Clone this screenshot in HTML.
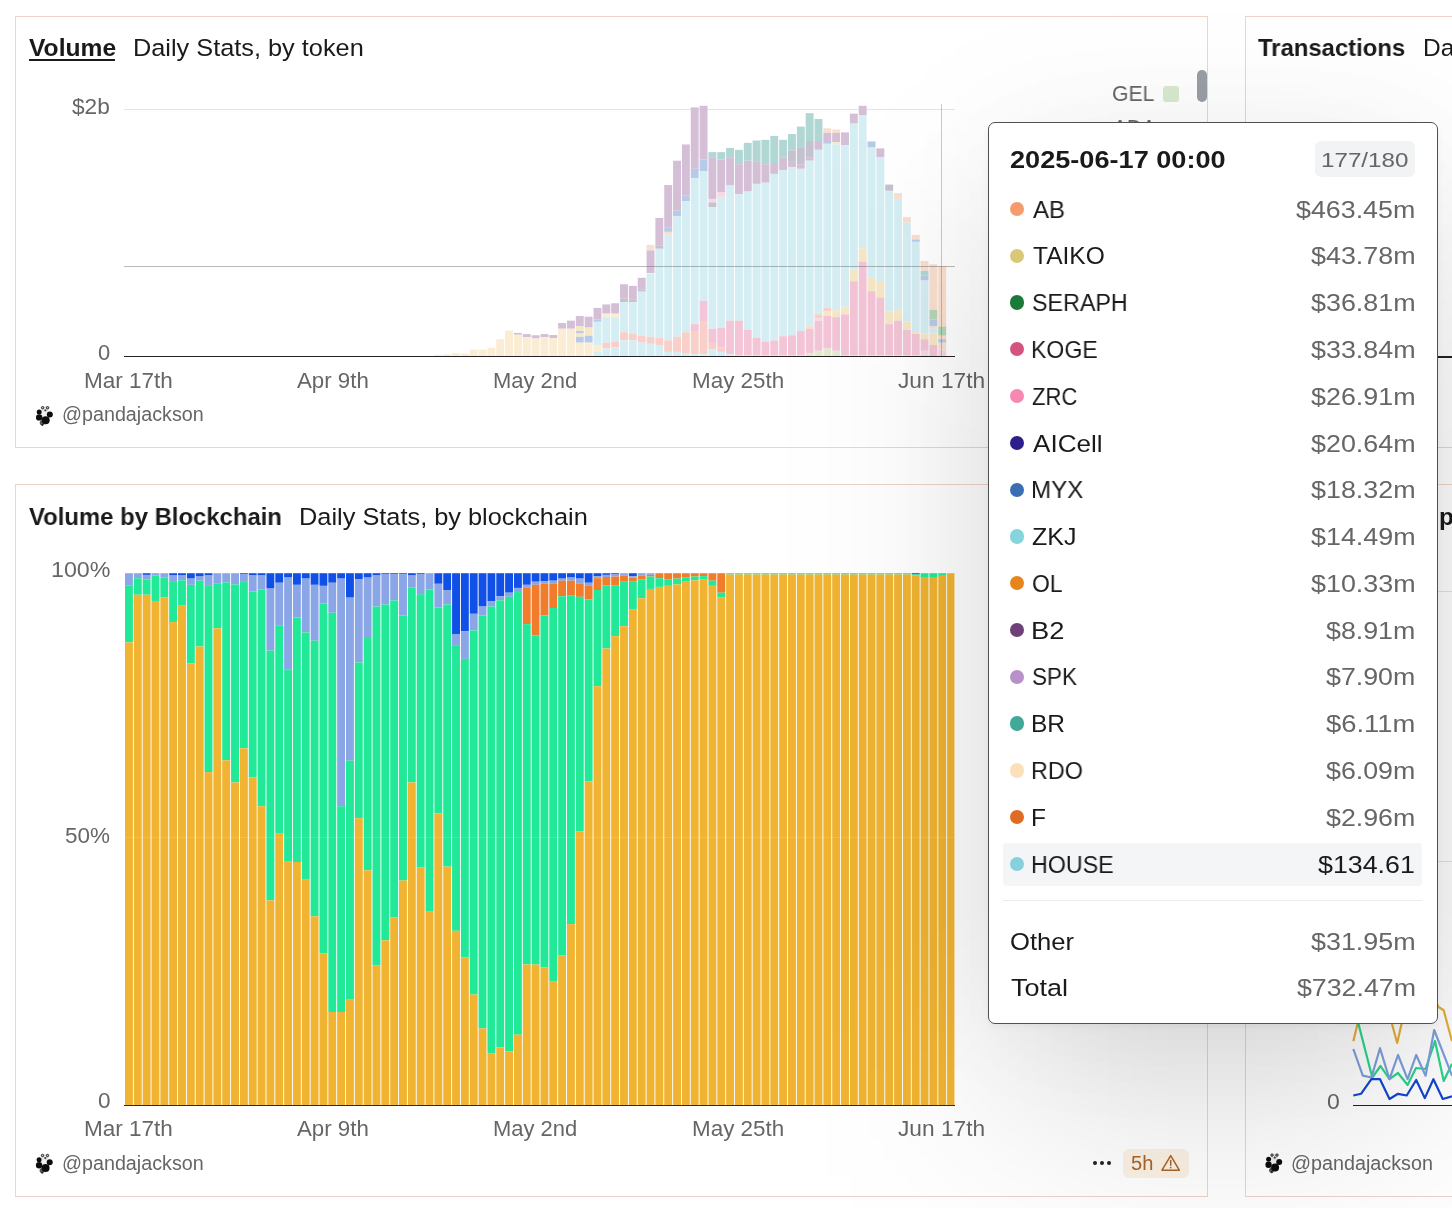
<!DOCTYPE html>
<html><head><meta charset="utf-8"><title>Dashboard</title>
<style>
html,body{margin:0;padding:0;}
body{width:1452px;height:1208px;overflow:hidden;position:relative;background:#fff;font-family:"Liberation Sans",sans-serif;}
.t{position:absolute;white-space:nowrap;line-height:1;transform-origin:0 0;will-change:transform;}
.r{position:absolute;}
.card{position:absolute;border:1px solid #f0d3cb;box-sizing:border-box;background:transparent;}
svg{position:absolute;left:0;top:0;}
</style></head><body>
<div class="card" style="left:15px;top:16px;width:1193px;height:432px;"></div>
<div class="card" style="left:15px;top:484px;width:1193px;height:713px;"></div>
<div class="card" style="left:1244.5px;top:16px;width:260px;height:432px;"></div>
<div class="card" style="left:1244.5px;top:484px;width:260px;height:713px;"></div>
<div class="t" style="left:28.80px;top:36.26px;font-size:24.5px;color:#1a1a1a;transform:scaleX(1.0047);font-weight:700;">Volume</div>
<div class="r" style="left:28.7px;top:59.3px;width:86.6px;height:1.7px;background:#1a1a1a;"></div>
<div class="t" style="left:132.53px;top:36.26px;font-size:24.5px;color:#1a1a1a;transform:scaleX(1.0332);">Daily Stats, by token</div>
<div class="t" style="left:72.39px;top:96.60px;font-size:21.5px;color:#666;transform:scaleX(1.0546);">$2b</div>
<div class="t" style="left:97.98px;top:342.90px;font-size:21.5px;color:#666;transform:scaleX(1.0194);">0</div>
<div class="r" style="left:124.0px;top:109.0px;width:831.0px;height:1.0px;background:#e4e4e4;"></div>
<div class="t" style="left:84.12px;top:371.10px;font-size:21.5px;color:#666;transform:scaleX(1.0477);">Mar 17th</div>
<div class="t" style="left:84.12px;top:1119.40px;font-size:21.5px;color:#666;transform:scaleX(1.0477);">Mar 17th</div>
<div class="t" style="left:296.70px;top:371.10px;font-size:21.5px;color:#666;transform:scaleX(1.0353);">Apr 9th</div>
<div class="t" style="left:296.70px;top:1119.40px;font-size:21.5px;color:#666;transform:scaleX(1.0353);">Apr 9th</div>
<div class="t" style="left:493.06px;top:371.10px;font-size:21.5px;color:#666;transform:scaleX(1.0214);">May 2nd</div>
<div class="t" style="left:493.06px;top:1119.40px;font-size:21.5px;color:#666;transform:scaleX(1.0214);">May 2nd</div>
<div class="t" style="left:692.23px;top:371.10px;font-size:21.5px;color:#666;transform:scaleX(1.0422);">May 25th</div>
<div class="t" style="left:692.23px;top:1119.40px;font-size:21.5px;color:#666;transform:scaleX(1.0422);">May 25th</div>
<div class="t" style="left:898.08px;top:371.10px;font-size:21.5px;color:#666;transform:scaleX(1.0557);">Jun 17th</div>
<div class="t" style="left:898.08px;top:1119.40px;font-size:21.5px;color:#666;transform:scaleX(1.0557);">Jun 17th</div>
<div class="t" style="left:61.88px;top:405.09px;font-size:19.5px;color:#666;transform:scaleX(1.0109);">@pandajackson</div>
<div class="t" style="left:61.88px;top:1154.49px;font-size:19.5px;color:#666;transform:scaleX(1.0109);">@pandajackson</div>
<div class="t" style="left:1291.08px;top:1153.69px;font-size:19.5px;color:#666;transform:scaleX(1.0124);">@pandajackson</div>
<div class="t" style="left:1111.92px;top:83.70px;font-size:21.5px;color:#666;transform:scaleX(0.9855);">GEL</div>
<div class="t" style="left:1113.00px;top:117.80px;font-size:21.5px;color:#666;transform:scaleX(0.9729);">ADA</div>
<div class="r" style="left:1162.6px;top:85.6px;width:16.6px;height:16.2px;background:#d9ead0;border-radius:3px;"></div>
<div class="r" style="left:1197.0px;top:70.0px;width:10.0px;height:32.0px;background:#9a9ea5;border-radius:5px;"></div>
<svg width="1452" height="460" viewBox="0 0 1452 460"><rect x="434.40" y="354.95" width="7.9" height="1.05" fill="#fbecd4"/><rect x="443.24" y="354.26" width="7.9" height="1.74" fill="#fbecd4"/><rect x="452.08" y="353.10" width="7.9" height="2.90" fill="#fbecd4"/><rect x="460.92" y="353.56" width="7.9" height="2.44" fill="#fbecd4"/><rect x="469.76" y="349.62" width="7.9" height="6.38" fill="#fbecd4"/><rect x="478.60" y="349.62" width="7.9" height="6.38" fill="#fbecd4"/><rect x="487.44" y="347.77" width="7.9" height="8.23" fill="#fbecd4"/><rect x="496.28" y="339.19" width="7.9" height="16.81" fill="#fbecd4"/><rect x="505.12" y="330.61" width="7.9" height="25.39" fill="#fbecd4"/><rect x="513.96" y="332.93" width="7.9" height="1.85" fill="#d4bfd6"/><rect x="513.96" y="334.78" width="7.9" height="21.22" fill="#fbecd4"/><rect x="522.80" y="334.09" width="7.9" height="3.01" fill="#d4bfd6"/><rect x="522.80" y="337.10" width="7.9" height="18.90" fill="#fbecd4"/><rect x="531.64" y="335.25" width="7.9" height="3.25" fill="#d4bfd6"/><rect x="531.64" y="338.49" width="7.9" height="17.51" fill="#fbecd4"/><rect x="540.48" y="334.09" width="7.9" height="3.01" fill="#d4bfd6"/><rect x="540.48" y="337.10" width="7.9" height="18.90" fill="#fbecd4"/><rect x="549.32" y="335.02" width="7.9" height="3.01" fill="#d4bfd6"/><rect x="549.32" y="338.03" width="7.9" height="17.97" fill="#fbecd4"/><rect x="558.16" y="322.96" width="7.9" height="5.80" fill="#d4bfd6"/><rect x="558.16" y="328.76" width="7.9" height="27.24" fill="#fbecd4"/><rect x="567.00" y="320.64" width="7.9" height="8.11" fill="#d4bfd6"/><rect x="567.00" y="328.76" width="7.9" height="27.24" fill="#fbecd4"/><rect x="575.84" y="316.01" width="7.9" height="10.43" fill="#d4bfd6"/><rect x="575.84" y="326.44" width="7.9" height="4.64" fill="#f6e7c6"/><rect x="575.84" y="331.08" width="7.9" height="2.32" fill="#b7cbe8"/><rect x="575.84" y="333.39" width="7.9" height="3.48" fill="#f6e7c6"/><rect x="575.84" y="336.87" width="7.9" height="5.80" fill="#b7cbe8"/><rect x="575.84" y="342.67" width="7.9" height="13.33" fill="#fbecd4"/><rect x="584.68" y="316.70" width="7.9" height="10.89" fill="#d4bfd6"/><rect x="584.68" y="327.60" width="7.9" height="8.11" fill="#f6e7c6"/><rect x="584.68" y="335.71" width="7.9" height="6.95" fill="#b7cbe8"/><rect x="584.68" y="342.67" width="7.9" height="13.33" fill="#fbecd4"/><rect x="593.52" y="307.90" width="7.9" height="11.59" fill="#d4bfd6"/><rect x="593.52" y="319.49" width="7.9" height="2.32" fill="#b7cbe8"/><rect x="593.52" y="321.80" width="7.9" height="23.18" fill="#d5eef3"/><rect x="593.52" y="344.98" width="7.9" height="6.95" fill="#fbecd4"/><rect x="593.52" y="351.94" width="7.9" height="4.06" fill="#d5eef3"/><rect x="602.36" y="304.42" width="7.9" height="9.27" fill="#d4bfd6"/><rect x="602.36" y="313.69" width="7.9" height="3.48" fill="#fbecd4"/><rect x="602.36" y="317.17" width="7.9" height="25.50" fill="#d5eef3"/><rect x="602.36" y="342.67" width="7.9" height="5.80" fill="#f9cfc9"/><rect x="602.36" y="348.46" width="7.9" height="7.54" fill="#d5eef3"/><rect x="611.20" y="303.26" width="7.9" height="10.43" fill="#d4bfd6"/><rect x="611.20" y="313.69" width="7.9" height="3.48" fill="#fbecd4"/><rect x="611.20" y="317.17" width="7.9" height="24.34" fill="#d5eef3"/><rect x="611.20" y="341.51" width="7.9" height="5.80" fill="#f9cfc9"/><rect x="611.20" y="347.30" width="7.9" height="8.70" fill="#d5eef3"/><rect x="620.04" y="284.25" width="7.9" height="14.37" fill="#d4bfd6"/><rect x="620.04" y="298.62" width="7.9" height="3.48" fill="#c4c2cf"/><rect x="620.04" y="302.10" width="7.9" height="30.13" fill="#d5eef3"/><rect x="620.04" y="332.23" width="7.9" height="8.11" fill="#f9cfc9"/><rect x="620.04" y="340.35" width="7.9" height="15.65" fill="#d5eef3"/><rect x="628.88" y="285.87" width="7.9" height="13.91" fill="#d4bfd6"/><rect x="628.88" y="299.78" width="7.9" height="2.32" fill="#c4c2cf"/><rect x="628.88" y="302.10" width="7.9" height="31.29" fill="#d5eef3"/><rect x="628.88" y="333.39" width="7.9" height="6.95" fill="#f9cfc9"/><rect x="628.88" y="340.35" width="7.9" height="15.65" fill="#d5eef3"/><rect x="637.72" y="277.76" width="7.9" height="11.59" fill="#d4bfd6"/><rect x="637.72" y="289.35" width="7.9" height="2.32" fill="#c4c2cf"/><rect x="637.72" y="291.67" width="7.9" height="44.04" fill="#d5eef3"/><rect x="637.72" y="335.71" width="7.9" height="6.95" fill="#f9cfc9"/><rect x="637.72" y="342.67" width="7.9" height="13.33" fill="#d5eef3"/><rect x="646.56" y="244.84" width="7.9" height="5.56" fill="#f9dfcf"/><rect x="646.56" y="250.41" width="7.9" height="22.72" fill="#d4bfd6"/><rect x="646.56" y="273.59" width="7.9" height="63.28" fill="#d5eef3"/><rect x="646.56" y="336.87" width="7.9" height="6.95" fill="#f9cfc9"/><rect x="646.56" y="343.82" width="7.9" height="12.18" fill="#d5eef3"/><rect x="655.40" y="217.96" width="7.9" height="27.35" fill="#d4bfd6"/><rect x="655.40" y="245.31" width="7.9" height="3.48" fill="#c4c2cf"/><rect x="655.40" y="248.79" width="7.9" height="89.24" fill="#d5eef3"/><rect x="655.40" y="338.03" width="7.9" height="6.95" fill="#f9cfc9"/><rect x="655.40" y="344.98" width="7.9" height="11.02" fill="#d5eef3"/><rect x="664.24" y="185.04" width="7.9" height="42.19" fill="#d4bfd6"/><rect x="664.24" y="227.23" width="7.9" height="4.64" fill="#b7cbe8"/><rect x="664.24" y="231.86" width="7.9" height="3.01" fill="#f9dfcf"/><rect x="664.24" y="234.88" width="7.9" height="105.47" fill="#d5eef3"/><rect x="664.24" y="340.35" width="7.9" height="11.59" fill="#f9cfc9"/><rect x="664.24" y="351.94" width="7.9" height="4.06" fill="#d5eef3"/><rect x="673.08" y="160.70" width="7.9" height="49.84" fill="#d4bfd6"/><rect x="673.08" y="210.54" width="7.9" height="5.80" fill="#b7cbe8"/><rect x="673.08" y="216.33" width="7.9" height="120.54" fill="#d5eef3"/><rect x="673.08" y="336.87" width="7.9" height="15.07" fill="#f9cfc9"/><rect x="673.08" y="351.94" width="7.9" height="4.06" fill="#d5eef3"/><rect x="681.92" y="144.47" width="7.9" height="51.00" fill="#d4bfd6"/><rect x="681.92" y="195.47" width="7.9" height="5.80" fill="#b7cbe8"/><rect x="681.92" y="201.27" width="7.9" height="130.97" fill="#d5eef3"/><rect x="681.92" y="332.23" width="7.9" height="20.86" fill="#f9cfc9"/><rect x="681.92" y="353.10" width="7.9" height="2.90" fill="#d5eef3"/><rect x="690.76" y="107.39" width="7.9" height="61.43" fill="#d4bfd6"/><rect x="690.76" y="168.81" width="7.9" height="9.27" fill="#b7cbe8"/><rect x="690.76" y="178.09" width="7.9" height="146.04" fill="#d5eef3"/><rect x="690.76" y="324.12" width="7.9" height="6.95" fill="#f3c5d7"/><rect x="690.76" y="331.08" width="7.9" height="23.18" fill="#f9cfc9"/><rect x="690.76" y="354.26" width="7.9" height="1.74" fill="#d5eef3"/><rect x="699.60" y="105.76" width="7.9" height="53.78" fill="#d4bfd6"/><rect x="699.60" y="159.54" width="7.9" height="11.59" fill="#b7cbe8"/><rect x="699.60" y="171.13" width="7.9" height="129.81" fill="#d5eef3"/><rect x="699.60" y="300.94" width="7.9" height="20.86" fill="#f3c5d7"/><rect x="699.60" y="321.80" width="7.9" height="32.45" fill="#f9cfc9"/><rect x="699.60" y="354.26" width="7.9" height="1.74" fill="#d5eef3"/><rect x="708.44" y="152.12" width="7.9" height="5.10" fill="#b0d7d3"/><rect x="708.44" y="157.22" width="7.9" height="41.72" fill="#d4bfd6"/><rect x="708.44" y="198.95" width="7.9" height="3.48" fill="#f7d9e6"/><rect x="708.44" y="202.42" width="7.9" height="4.64" fill="#c4c2cf"/><rect x="708.44" y="207.06" width="7.9" height="121.70" fill="#d5eef3"/><rect x="708.44" y="328.76" width="7.9" height="15.07" fill="#f3c5d7"/><rect x="708.44" y="343.82" width="7.9" height="5.80" fill="#f9cfc9"/><rect x="708.44" y="349.62" width="7.9" height="6.38" fill="#d5eef3"/><rect x="717.28" y="152.12" width="7.9" height="7.42" fill="#b0d7d3"/><rect x="717.28" y="159.54" width="7.9" height="32.45" fill="#d4bfd6"/><rect x="717.28" y="191.99" width="7.9" height="5.80" fill="#f7d9e6"/><rect x="717.28" y="197.79" width="7.9" height="129.81" fill="#d5eef3"/><rect x="717.28" y="327.60" width="7.9" height="19.70" fill="#f3c5d7"/><rect x="717.28" y="347.30" width="7.9" height="4.64" fill="#f9cfc9"/><rect x="717.28" y="351.94" width="7.9" height="4.06" fill="#d5eef3"/><rect x="726.12" y="147.95" width="7.9" height="9.27" fill="#b0d7d3"/><rect x="726.12" y="157.22" width="7.9" height="28.28" fill="#d4bfd6"/><rect x="726.12" y="185.50" width="7.9" height="135.14" fill="#d5eef3"/><rect x="726.12" y="320.64" width="7.9" height="33.61" fill="#f3c5d7"/><rect x="726.12" y="354.26" width="7.9" height="1.74" fill="#d5eef3"/><rect x="734.96" y="149.81" width="7.9" height="14.37" fill="#b0d7d3"/><rect x="734.96" y="164.18" width="7.9" height="30.13" fill="#d4bfd6"/><rect x="734.96" y="194.31" width="7.9" height="126.33" fill="#d5eef3"/><rect x="734.96" y="320.64" width="7.9" height="34.77" fill="#f3c5d7"/><rect x="734.96" y="355.41" width="7.9" height="0.59" fill="#f7d9e6"/><rect x="743.80" y="142.85" width="7.9" height="17.85" fill="#b0d7d3"/><rect x="743.80" y="160.70" width="7.9" height="30.83" fill="#d4bfd6"/><rect x="743.80" y="191.53" width="7.9" height="138.39" fill="#d5eef3"/><rect x="743.80" y="329.92" width="7.9" height="25.50" fill="#f3c5d7"/><rect x="743.80" y="355.41" width="7.9" height="0.59" fill="#f7d9e6"/><rect x="752.64" y="140.53" width="7.9" height="21.33" fill="#b0d7d3"/><rect x="752.64" y="161.86" width="7.9" height="22.02" fill="#d4bfd6"/><rect x="752.64" y="183.88" width="7.9" height="153.69" fill="#d5eef3"/><rect x="752.64" y="337.57" width="7.9" height="17.85" fill="#f3c5d7"/><rect x="752.64" y="355.41" width="7.9" height="0.59" fill="#f7d9e6"/><rect x="761.48" y="139.84" width="7.9" height="24.34" fill="#b0d7d3"/><rect x="761.48" y="164.18" width="7.9" height="18.54" fill="#d4bfd6"/><rect x="761.48" y="182.72" width="7.9" height="158.79" fill="#d5eef3"/><rect x="761.48" y="341.51" width="7.9" height="13.91" fill="#f3c5d7"/><rect x="761.48" y="355.41" width="7.9" height="0.59" fill="#f7d9e6"/><rect x="770.32" y="135.90" width="7.9" height="27.12" fill="#b0d7d3"/><rect x="770.32" y="163.02" width="7.9" height="10.89" fill="#d4bfd6"/><rect x="770.32" y="173.91" width="7.9" height="166.43" fill="#d5eef3"/><rect x="770.32" y="340.35" width="7.9" height="15.07" fill="#f3c5d7"/><rect x="770.32" y="355.41" width="7.9" height="0.59" fill="#f7d9e6"/><rect x="779.16" y="139.84" width="7.9" height="17.39" fill="#b0d7d3"/><rect x="779.16" y="157.22" width="7.9" height="12.75" fill="#d4bfd6"/><rect x="779.16" y="169.97" width="7.9" height="166.20" fill="#d5eef3"/><rect x="779.16" y="336.18" width="7.9" height="19.24" fill="#f3c5d7"/><rect x="779.16" y="355.41" width="7.9" height="0.59" fill="#f7d9e6"/><rect x="788.00" y="134.04" width="7.9" height="16.23" fill="#b0d7d3"/><rect x="788.00" y="150.27" width="7.9" height="11.59" fill="#c4c2cf"/><rect x="788.00" y="161.86" width="7.9" height="5.10" fill="#d4bfd6"/><rect x="788.00" y="166.96" width="7.9" height="168.29" fill="#d5eef3"/><rect x="788.00" y="335.25" width="7.9" height="20.17" fill="#f3c5d7"/><rect x="788.00" y="355.41" width="7.9" height="0.59" fill="#f7d9e6"/><rect x="796.84" y="126.62" width="7.9" height="21.33" fill="#b0d7d3"/><rect x="796.84" y="147.95" width="7.9" height="16.23" fill="#c4c2cf"/><rect x="796.84" y="164.18" width="7.9" height="4.64" fill="#d4bfd6"/><rect x="796.84" y="168.81" width="7.9" height="162.26" fill="#d5eef3"/><rect x="796.84" y="331.08" width="7.9" height="24.34" fill="#f3c5d7"/><rect x="796.84" y="355.41" width="7.9" height="0.59" fill="#f7d9e6"/><rect x="805.68" y="113.18" width="7.9" height="27.82" fill="#b0d7d3"/><rect x="805.68" y="141.00" width="7.9" height="16.23" fill="#c4c2cf"/><rect x="805.68" y="157.22" width="7.9" height="3.48" fill="#d4bfd6"/><rect x="805.68" y="160.70" width="7.9" height="164.58" fill="#d5eef3"/><rect x="805.68" y="325.28" width="7.9" height="3.48" fill="#f9dfcf"/><rect x="805.68" y="328.76" width="7.9" height="24.34" fill="#f3c5d7"/><rect x="805.68" y="353.10" width="7.9" height="2.90" fill="#e3ead0"/><rect x="814.52" y="118.98" width="7.9" height="22.02" fill="#b0d7d3"/><rect x="814.52" y="141.00" width="7.9" height="8.81" fill="#d4bfd6"/><rect x="814.52" y="149.81" width="7.9" height="164.58" fill="#d5eef3"/><rect x="814.52" y="314.39" width="7.9" height="3.94" fill="#f9cfc9"/><rect x="814.52" y="318.33" width="7.9" height="2.32" fill="#f7d9e6"/><rect x="814.52" y="320.64" width="7.9" height="30.13" fill="#f3c5d7"/><rect x="814.52" y="350.78" width="7.9" height="5.22" fill="#e3ead0"/><rect x="823.36" y="128.25" width="7.9" height="4.64" fill="#f9dfcf"/><rect x="823.36" y="132.88" width="7.9" height="8.11" fill="#d4bfd6"/><rect x="823.36" y="141.00" width="7.9" height="2.78" fill="#b7cbe8"/><rect x="823.36" y="143.78" width="7.9" height="164.12" fill="#d5eef3"/><rect x="823.36" y="307.90" width="7.9" height="3.48" fill="#f9cfc9"/><rect x="823.36" y="311.37" width="7.9" height="4.64" fill="#f6e7c6"/><rect x="823.36" y="316.01" width="7.9" height="32.45" fill="#f3c5d7"/><rect x="823.36" y="348.46" width="7.9" height="7.54" fill="#e3ead0"/><rect x="832.20" y="129.41" width="7.9" height="3.48" fill="#f9dfcf"/><rect x="832.20" y="132.88" width="7.9" height="9.27" fill="#d4bfd6"/><rect x="832.20" y="142.16" width="7.9" height="2.32" fill="#f6e7c6"/><rect x="832.20" y="144.47" width="7.9" height="165.74" fill="#d5eef3"/><rect x="832.20" y="310.21" width="7.9" height="6.95" fill="#f6e7c6"/><rect x="832.20" y="317.17" width="7.9" height="33.61" fill="#f3c5d7"/><rect x="832.20" y="350.78" width="7.9" height="5.22" fill="#e3ead0"/><rect x="841.04" y="132.42" width="7.9" height="12.75" fill="#d4bfd6"/><rect x="841.04" y="145.17" width="7.9" height="161.57" fill="#d5eef3"/><rect x="841.04" y="306.74" width="7.9" height="7.65" fill="#f6e7c6"/><rect x="841.04" y="314.39" width="7.9" height="41.03" fill="#f3c5d7"/><rect x="841.04" y="355.41" width="7.9" height="0.59" fill="#f7d9e6"/><rect x="849.88" y="113.64" width="7.9" height="9.97" fill="#d4bfd6"/><rect x="849.88" y="123.61" width="7.9" height="146.04" fill="#d5eef3"/><rect x="849.88" y="269.65" width="7.9" height="11.59" fill="#f6e7c6"/><rect x="849.88" y="281.24" width="7.9" height="74.18" fill="#f3c5d7"/><rect x="849.88" y="355.41" width="7.9" height="0.59" fill="#f7d9e6"/><rect x="858.72" y="105.76" width="7.9" height="9.27" fill="#d4bfd6"/><rect x="858.72" y="115.03" width="7.9" height="133.29" fill="#d5eef3"/><rect x="858.72" y="248.32" width="7.9" height="13.21" fill="#f6e7c6"/><rect x="858.72" y="261.53" width="7.9" height="93.88" fill="#f3c5d7"/><rect x="858.72" y="355.41" width="7.9" height="0.59" fill="#f7d9e6"/><rect x="867.56" y="141.46" width="7.9" height="6.03" fill="#b7cbe8"/><rect x="867.56" y="147.49" width="7.9" height="129.81" fill="#d5eef3"/><rect x="867.56" y="277.30" width="7.9" height="13.91" fill="#f6e7c6"/><rect x="867.56" y="291.21" width="7.9" height="64.21" fill="#f3c5d7"/><rect x="867.56" y="355.41" width="7.9" height="0.59" fill="#f7d9e6"/><rect x="876.40" y="148.41" width="7.9" height="8.81" fill="#d4bfd6"/><rect x="876.40" y="157.22" width="7.9" height="124.71" fill="#d5eef3"/><rect x="876.40" y="281.93" width="7.9" height="15.53" fill="#f6e7c6"/><rect x="876.40" y="297.46" width="7.9" height="57.95" fill="#f3c5d7"/><rect x="876.40" y="355.41" width="7.9" height="0.59" fill="#f7d9e6"/><rect x="885.24" y="184.58" width="7.9" height="6.26" fill="#c4c2cf"/><rect x="885.24" y="190.83" width="7.9" height="120.54" fill="#d5eef3"/><rect x="885.24" y="311.37" width="7.9" height="12.75" fill="#f6e7c6"/><rect x="885.24" y="324.12" width="7.9" height="31.29" fill="#f3c5d7"/><rect x="885.24" y="355.41" width="7.9" height="0.59" fill="#f7d9e6"/><rect x="894.08" y="193.15" width="7.9" height="5.80" fill="#f9dfcf"/><rect x="894.08" y="198.95" width="7.9" height="110.11" fill="#d5eef3"/><rect x="894.08" y="309.05" width="7.9" height="11.59" fill="#f6e7c6"/><rect x="894.08" y="320.64" width="7.9" height="34.77" fill="#f3c5d7"/><rect x="894.08" y="355.41" width="7.9" height="0.59" fill="#f7d9e6"/><rect x="902.92" y="217.03" width="7.9" height="5.56" fill="#f9dfcf"/><rect x="902.92" y="222.59" width="7.9" height="98.75" fill="#d5eef3"/><rect x="902.92" y="321.34" width="7.9" height="8.58" fill="#f6e7c6"/><rect x="902.92" y="329.92" width="7.9" height="25.50" fill="#f3c5d7"/><rect x="902.92" y="355.41" width="7.9" height="0.59" fill="#f7d9e6"/><rect x="911.76" y="234.88" width="7.9" height="4.64" fill="#f9dfcf"/><rect x="911.76" y="239.51" width="7.9" height="2.32" fill="#b7cbe8"/><rect x="911.76" y="241.83" width="7.9" height="89.24" fill="#d5eef3"/><rect x="911.76" y="331.08" width="7.9" height="2.78" fill="#f6e7c6"/><rect x="911.76" y="333.86" width="7.9" height="21.56" fill="#f3c5d7"/><rect x="911.76" y="355.41" width="7.9" height="0.59" fill="#f7d9e6"/><rect x="920.60" y="261.07" width="7.9" height="9.74" fill="#f9dfcf"/><rect x="920.60" y="270.81" width="7.9" height="4.64" fill="#b0d7d3"/><rect x="920.60" y="275.44" width="7.9" height="5.10" fill="#b7cbe8"/><rect x="920.60" y="280.54" width="7.9" height="52.85" fill="#d5eef3"/><rect x="920.60" y="333.39" width="7.9" height="5.80" fill="#f6e7c6"/><rect x="920.60" y="339.19" width="7.9" height="11.59" fill="#f3c5d7"/><rect x="920.60" y="350.78" width="7.9" height="5.22" fill="#f7d9e6"/><rect x="929.44" y="264.32" width="7.9" height="45.43" fill="#f9dfcf"/><rect x="929.44" y="309.75" width="7.9" height="9.74" fill="#b6d6b8"/><rect x="929.44" y="319.49" width="7.9" height="6.95" fill="#b7cbe8"/><rect x="929.44" y="326.44" width="7.9" height="2.32" fill="#f9dfcf"/><rect x="929.44" y="328.76" width="7.9" height="4.64" fill="#d5eef3"/><rect x="929.44" y="333.39" width="7.9" height="11.59" fill="#f6e7c6"/><rect x="929.44" y="344.98" width="7.9" height="11.02" fill="#f3c5d7"/><rect x="938.28" y="266.17" width="7.9" height="60.27" fill="#f9dfcf"/><rect x="938.28" y="326.44" width="7.9" height="9.27" fill="#b6d6b8"/><rect x="938.28" y="335.71" width="7.9" height="3.48" fill="#f9dfcf"/><rect x="938.28" y="339.19" width="7.9" height="3.48" fill="#b7cbe8"/><rect x="938.28" y="342.67" width="7.9" height="6.95" fill="#f9dfcf"/><rect x="938.28" y="349.62" width="7.9" height="6.38" fill="#f7d9e6"/></svg>
<div class="r" style="left:124.0px;top:266.0px;width:831.0px;height:1.3px;background:rgba(90,90,90,0.42);"></div>
<div class="r" style="left:941.1px;top:104.0px;width:1.4px;height:252.0px;background:rgba(90,90,90,0.32);"></div>
<div class="r" style="left:124.0px;top:355.7px;width:831.0px;height:1.8px;background:#222;"></div>
<div class="t" style="left:29.21px;top:504.86px;font-size:24.5px;color:#1a1a1a;transform:scaleX(0.9744);font-weight:700;">Volume by Blockchain</div>
<div class="t" style="left:299.23px;top:504.86px;font-size:24.5px;color:#1a1a1a;transform:scaleX(1.0345);">Daily Stats, by blockchain</div>
<div class="t" style="left:50.57px;top:560.10px;font-size:21.5px;color:#666;transform:scaleX(1.0816);">100%</div>
<div class="t" style="left:65.06px;top:826.40px;font-size:21.5px;color:#666;transform:scaleX(1.0459);">50%</div>
<div class="t" style="left:97.76px;top:1091.40px;font-size:21.5px;color:#666;transform:scaleX(1.0485);">0</div>
<div class="t" style="left:1327.15px;top:1091.70px;font-size:21.5px;color:#666;transform:scaleX(1.0680);">0</div>
<svg width="1452" height="1208" viewBox="0 0 1452 1208"><rect x="125.00" y="573.20" width="7.9" height="12.04" fill="#8aa6e6"/><rect x="125.00" y="585.24" width="7.9" height="57.11" fill="#22e998"/><rect x="125.00" y="642.35" width="7.9" height="462.95" fill="#f0b432"/><rect x="133.84" y="573.20" width="7.9" height="5.01" fill="#8aa6e6"/><rect x="133.84" y="578.21" width="7.9" height="16.55" fill="#22e998"/><rect x="133.84" y="594.76" width="7.9" height="510.54" fill="#f0b432"/><rect x="142.68" y="573.20" width="7.9" height="1.70" fill="#1150e6"/><rect x="142.68" y="574.90" width="7.9" height="4.76" fill="#8aa6e6"/><rect x="142.68" y="579.66" width="7.9" height="15.10" fill="#22e998"/><rect x="142.68" y="594.76" width="7.9" height="510.54" fill="#f0b432"/><rect x="151.52" y="573.20" width="7.9" height="2.32" fill="#8aa6e6"/><rect x="151.52" y="575.52" width="7.9" height="25.45" fill="#22e998"/><rect x="151.52" y="600.97" width="7.9" height="504.33" fill="#f0b432"/><rect x="160.36" y="573.20" width="7.9" height="4.39" fill="#8aa6e6"/><rect x="160.36" y="577.59" width="7.9" height="19.66" fill="#22e998"/><rect x="160.36" y="597.24" width="7.9" height="508.06" fill="#f0b432"/><rect x="169.20" y="573.20" width="7.9" height="2.32" fill="#1150e6"/><rect x="169.20" y="575.52" width="7.9" height="5.59" fill="#8aa6e6"/><rect x="169.20" y="581.10" width="7.9" height="40.97" fill="#22e998"/><rect x="169.20" y="622.07" width="7.9" height="483.23" fill="#f0b432"/><rect x="178.04" y="573.20" width="7.9" height="2.32" fill="#1150e6"/><rect x="178.04" y="575.52" width="7.9" height="4.76" fill="#8aa6e6"/><rect x="178.04" y="580.28" width="7.9" height="24.83" fill="#22e998"/><rect x="178.04" y="605.11" width="7.9" height="500.19" fill="#f0b432"/><rect x="186.88" y="573.20" width="7.9" height="5.42" fill="#1150e6"/><rect x="186.88" y="578.62" width="7.9" height="6.21" fill="#8aa6e6"/><rect x="186.88" y="584.83" width="7.9" height="78.63" fill="#22e998"/><rect x="186.88" y="663.46" width="7.9" height="441.84" fill="#f0b432"/><rect x="195.72" y="573.20" width="7.9" height="3.35" fill="#1150e6"/><rect x="195.72" y="576.55" width="7.9" height="4.14" fill="#8aa6e6"/><rect x="195.72" y="580.69" width="7.9" height="65.80" fill="#22e998"/><rect x="195.72" y="646.49" width="7.9" height="458.81" fill="#f0b432"/><rect x="204.56" y="573.20" width="7.9" height="2.32" fill="#1150e6"/><rect x="204.56" y="575.52" width="7.9" height="10.35" fill="#8aa6e6"/><rect x="204.56" y="585.86" width="7.9" height="186.22" fill="#22e998"/><rect x="204.56" y="772.08" width="7.9" height="333.22" fill="#f0b432"/><rect x="213.40" y="573.20" width="7.9" height="10.59" fill="#8aa6e6"/><rect x="213.40" y="583.79" width="7.9" height="44.49" fill="#22e998"/><rect x="213.40" y="628.28" width="7.9" height="477.02" fill="#f0b432"/><rect x="222.24" y="573.20" width="7.9" height="9.15" fill="#8aa6e6"/><rect x="222.24" y="582.35" width="7.9" height="177.94" fill="#22e998"/><rect x="222.24" y="760.29" width="7.9" height="345.01" fill="#f0b432"/><rect x="231.08" y="573.20" width="7.9" height="11.22" fill="#8aa6e6"/><rect x="231.08" y="584.42" width="7.9" height="198.01" fill="#22e998"/><rect x="231.08" y="782.43" width="7.9" height="322.87" fill="#f0b432"/><rect x="239.92" y="573.20" width="7.9" height="1.28" fill="#1150e6"/><rect x="239.92" y="574.48" width="7.9" height="6.62" fill="#8aa6e6"/><rect x="239.92" y="581.10" width="7.9" height="167.18" fill="#22e998"/><rect x="239.92" y="748.29" width="7.9" height="357.01" fill="#f0b432"/><rect x="248.76" y="573.20" width="7.9" height="2.32" fill="#1150e6"/><rect x="248.76" y="575.52" width="7.9" height="15.93" fill="#8aa6e6"/><rect x="248.76" y="591.45" width="7.9" height="185.81" fill="#22e998"/><rect x="248.76" y="777.26" width="7.9" height="328.04" fill="#f0b432"/><rect x="257.60" y="573.20" width="7.9" height="2.32" fill="#1150e6"/><rect x="257.60" y="575.52" width="7.9" height="13.86" fill="#8aa6e6"/><rect x="257.60" y="589.38" width="7.9" height="216.84" fill="#22e998"/><rect x="257.60" y="806.22" width="7.9" height="299.08" fill="#f0b432"/><rect x="266.44" y="573.20" width="7.9" height="15.35" fill="#1150e6"/><rect x="266.44" y="588.55" width="7.9" height="62.07" fill="#8aa6e6"/><rect x="266.44" y="650.63" width="7.9" height="249.67" fill="#22e998"/><rect x="266.44" y="900.30" width="7.9" height="205.00" fill="#f0b432"/><rect x="275.28" y="573.20" width="7.9" height="9.56" fill="#1150e6"/><rect x="275.28" y="582.76" width="7.9" height="42.42" fill="#8aa6e6"/><rect x="275.28" y="625.18" width="7.9" height="207.92" fill="#22e998"/><rect x="275.28" y="833.10" width="7.9" height="272.20" fill="#f0b432"/><rect x="284.12" y="573.20" width="7.9" height="4.39" fill="#1150e6"/><rect x="284.12" y="577.59" width="7.9" height="91.66" fill="#8aa6e6"/><rect x="284.12" y="669.25" width="7.9" height="192.45" fill="#22e998"/><rect x="284.12" y="861.70" width="7.9" height="243.60" fill="#f0b432"/><rect x="292.96" y="573.20" width="7.9" height="11.63" fill="#1150e6"/><rect x="292.96" y="584.83" width="7.9" height="32.69" fill="#8aa6e6"/><rect x="292.96" y="617.52" width="7.9" height="244.48" fill="#22e998"/><rect x="292.96" y="862.00" width="7.9" height="243.30" fill="#f0b432"/><rect x="301.80" y="573.20" width="7.9" height="5.42" fill="#1150e6"/><rect x="301.80" y="578.62" width="7.9" height="53.80" fill="#8aa6e6"/><rect x="301.80" y="632.42" width="7.9" height="247.28" fill="#22e998"/><rect x="301.80" y="879.70" width="7.9" height="225.60" fill="#f0b432"/><rect x="310.64" y="573.20" width="7.9" height="11.63" fill="#1150e6"/><rect x="310.64" y="584.83" width="7.9" height="55.87" fill="#8aa6e6"/><rect x="310.64" y="640.70" width="7.9" height="275.60" fill="#22e998"/><rect x="310.64" y="916.30" width="7.9" height="189.00" fill="#f0b432"/><rect x="319.48" y="573.20" width="7.9" height="12.66" fill="#1150e6"/><rect x="319.48" y="585.86" width="7.9" height="17.59" fill="#8aa6e6"/><rect x="319.48" y="603.45" width="7.9" height="350.05" fill="#22e998"/><rect x="319.48" y="953.50" width="7.9" height="151.80" fill="#f0b432"/><rect x="328.32" y="573.20" width="7.9" height="9.56" fill="#1150e6"/><rect x="328.32" y="582.76" width="7.9" height="30.00" fill="#8aa6e6"/><rect x="328.32" y="612.76" width="7.9" height="399.24" fill="#22e998"/><rect x="328.32" y="1012.00" width="7.9" height="93.30" fill="#f0b432"/><rect x="337.16" y="573.20" width="7.9" height="5.42" fill="#1150e6"/><rect x="337.16" y="578.62" width="7.9" height="227.60" fill="#8aa6e6"/><rect x="337.16" y="806.22" width="7.9" height="205.78" fill="#22e998"/><rect x="337.16" y="1012.00" width="7.9" height="93.30" fill="#f0b432"/><rect x="346.00" y="573.20" width="7.9" height="24.46" fill="#1150e6"/><rect x="346.00" y="597.66" width="7.9" height="163.05" fill="#8aa6e6"/><rect x="346.00" y="760.70" width="7.9" height="239.00" fill="#22e998"/><rect x="346.00" y="999.70" width="7.9" height="105.60" fill="#f0b432"/><rect x="354.84" y="573.20" width="7.9" height="5.84" fill="#1150e6"/><rect x="354.84" y="579.04" width="7.9" height="83.39" fill="#8aa6e6"/><rect x="354.84" y="662.42" width="7.9" height="155.78" fill="#22e998"/><rect x="354.84" y="818.20" width="7.9" height="287.10" fill="#f0b432"/><rect x="363.68" y="573.20" width="7.9" height="4.39" fill="#1150e6"/><rect x="363.68" y="577.59" width="7.9" height="59.38" fill="#8aa6e6"/><rect x="363.68" y="636.97" width="7.9" height="233.33" fill="#22e998"/><rect x="363.68" y="870.30" width="7.9" height="235.00" fill="#f0b432"/><rect x="372.52" y="573.20" width="7.9" height="2.32" fill="#1150e6"/><rect x="372.52" y="575.52" width="7.9" height="31.04" fill="#8aa6e6"/><rect x="372.52" y="606.55" width="7.9" height="358.95" fill="#22e998"/><rect x="372.52" y="965.50" width="7.9" height="139.80" fill="#f0b432"/><rect x="381.36" y="573.20" width="7.9" height="1.28" fill="#1150e6"/><rect x="381.36" y="574.48" width="7.9" height="30.00" fill="#8aa6e6"/><rect x="381.36" y="604.49" width="7.9" height="335.81" fill="#22e998"/><rect x="381.36" y="940.30" width="7.9" height="165.00" fill="#f0b432"/><rect x="390.20" y="573.20" width="7.9" height="1.28" fill="#1150e6"/><rect x="390.20" y="574.48" width="7.9" height="25.86" fill="#8aa6e6"/><rect x="390.20" y="600.35" width="7.9" height="317.15" fill="#22e998"/><rect x="390.20" y="917.50" width="7.9" height="187.80" fill="#f0b432"/><rect x="399.04" y="573.20" width="7.9" height="0.87" fill="#1150e6"/><rect x="399.04" y="574.07" width="7.9" height="41.38" fill="#8aa6e6"/><rect x="399.04" y="615.45" width="7.9" height="265.05" fill="#22e998"/><rect x="399.04" y="880.50" width="7.9" height="224.80" fill="#f0b432"/><rect x="407.88" y="573.20" width="7.9" height="2.32" fill="#1150e6"/><rect x="407.88" y="575.52" width="7.9" height="11.79" fill="#8aa6e6"/><rect x="407.88" y="587.31" width="7.9" height="195.12" fill="#22e998"/><rect x="407.88" y="782.43" width="7.9" height="322.87" fill="#f0b432"/><rect x="416.72" y="573.20" width="7.9" height="1.28" fill="#1150e6"/><rect x="416.72" y="574.48" width="7.9" height="19.66" fill="#8aa6e6"/><rect x="416.72" y="594.14" width="7.9" height="273.06" fill="#22e998"/><rect x="416.72" y="867.20" width="7.9" height="238.10" fill="#f0b432"/><rect x="425.56" y="573.20" width="7.9" height="16.18" fill="#8aa6e6"/><rect x="425.56" y="589.38" width="7.9" height="322.32" fill="#22e998"/><rect x="425.56" y="911.70" width="7.9" height="193.60" fill="#f0b432"/><rect x="434.40" y="573.20" width="7.9" height="10.59" fill="#1150e6"/><rect x="434.40" y="583.79" width="7.9" height="23.79" fill="#8aa6e6"/><rect x="434.40" y="607.59" width="7.9" height="205.81" fill="#22e998"/><rect x="434.40" y="813.40" width="7.9" height="291.90" fill="#f0b432"/><rect x="443.24" y="573.20" width="7.9" height="16.80" fill="#1150e6"/><rect x="443.24" y="590.00" width="7.9" height="14.48" fill="#8aa6e6"/><rect x="443.24" y="604.49" width="7.9" height="262.11" fill="#22e998"/><rect x="443.24" y="866.60" width="7.9" height="238.70" fill="#f0b432"/><rect x="452.08" y="573.20" width="7.9" height="61.29" fill="#1150e6"/><rect x="452.08" y="634.49" width="7.9" height="11.38" fill="#8aa6e6"/><rect x="452.08" y="645.87" width="7.9" height="284.93" fill="#22e998"/><rect x="452.08" y="930.80" width="7.9" height="174.50" fill="#f0b432"/><rect x="460.92" y="573.20" width="7.9" height="58.18" fill="#1150e6"/><rect x="460.92" y="631.38" width="7.9" height="27.52" fill="#8aa6e6"/><rect x="460.92" y="658.90" width="7.9" height="298.40" fill="#22e998"/><rect x="460.92" y="957.30" width="7.9" height="148.00" fill="#f0b432"/><rect x="469.76" y="573.20" width="7.9" height="40.60" fill="#1150e6"/><rect x="469.76" y="613.80" width="7.9" height="16.55" fill="#8aa6e6"/><rect x="469.76" y="630.35" width="7.9" height="364.15" fill="#22e998"/><rect x="469.76" y="994.50" width="7.9" height="110.80" fill="#f0b432"/><rect x="478.60" y="573.20" width="7.9" height="33.35" fill="#1150e6"/><rect x="478.60" y="606.55" width="7.9" height="8.90" fill="#8aa6e6"/><rect x="478.60" y="615.45" width="7.9" height="412.95" fill="#22e998"/><rect x="478.60" y="1028.40" width="7.9" height="76.90" fill="#f0b432"/><rect x="487.44" y="573.20" width="7.9" height="28.18" fill="#1150e6"/><rect x="487.44" y="601.38" width="7.9" height="5.17" fill="#8aa6e6"/><rect x="487.44" y="606.55" width="7.9" height="446.65" fill="#22e998"/><rect x="487.44" y="1053.20" width="7.9" height="52.10" fill="#f0b432"/><rect x="496.28" y="573.20" width="7.9" height="23.01" fill="#1150e6"/><rect x="496.28" y="596.21" width="7.9" height="4.14" fill="#8aa6e6"/><rect x="496.28" y="600.35" width="7.9" height="447.05" fill="#22e998"/><rect x="496.28" y="1047.40" width="7.9" height="57.90" fill="#f0b432"/><rect x="505.12" y="573.20" width="7.9" height="19.49" fill="#1150e6"/><rect x="505.12" y="592.69" width="7.9" height="4.14" fill="#8aa6e6"/><rect x="505.12" y="596.83" width="7.9" height="454.67" fill="#22e998"/><rect x="505.12" y="1051.50" width="7.9" height="53.80" fill="#f0b432"/><rect x="513.96" y="573.20" width="7.9" height="14.73" fill="#1150e6"/><rect x="513.96" y="587.93" width="7.9" height="4.14" fill="#8aa6e6"/><rect x="513.96" y="592.07" width="7.9" height="442.63" fill="#22e998"/><rect x="513.96" y="1034.70" width="7.9" height="70.60" fill="#f0b432"/><rect x="522.80" y="573.20" width="7.9" height="11.63" fill="#1150e6"/><rect x="522.80" y="584.83" width="7.9" height="3.10" fill="#8aa6e6"/><rect x="522.80" y="587.93" width="7.9" height="36.21" fill="#f07c2c"/><rect x="522.80" y="624.14" width="7.9" height="340.36" fill="#22e998"/><rect x="522.80" y="964.50" width="7.9" height="140.80" fill="#f0b432"/><rect x="531.64" y="573.20" width="7.9" height="8.53" fill="#1150e6"/><rect x="531.64" y="581.73" width="7.9" height="3.10" fill="#8aa6e6"/><rect x="531.64" y="584.83" width="7.9" height="50.69" fill="#f07c2c"/><rect x="531.64" y="635.52" width="7.9" height="328.98" fill="#22e998"/><rect x="531.64" y="964.50" width="7.9" height="140.80" fill="#f0b432"/><rect x="540.48" y="573.20" width="7.9" height="7.90" fill="#1150e6"/><rect x="540.48" y="581.10" width="7.9" height="2.69" fill="#8aa6e6"/><rect x="540.48" y="583.79" width="7.9" height="31.66" fill="#f07c2c"/><rect x="540.48" y="615.45" width="7.9" height="352.15" fill="#22e998"/><rect x="540.48" y="967.60" width="7.9" height="137.70" fill="#f0b432"/><rect x="549.32" y="573.20" width="7.9" height="7.49" fill="#1150e6"/><rect x="549.32" y="580.69" width="7.9" height="3.10" fill="#8aa6e6"/><rect x="549.32" y="583.79" width="7.9" height="24.21" fill="#f07c2c"/><rect x="549.32" y="608.00" width="7.9" height="373.70" fill="#22e998"/><rect x="549.32" y="981.70" width="7.9" height="123.60" fill="#f0b432"/><rect x="558.16" y="573.20" width="7.9" height="5.42" fill="#1150e6"/><rect x="558.16" y="578.62" width="7.9" height="2.07" fill="#8aa6e6"/><rect x="558.16" y="580.69" width="7.9" height="15.52" fill="#f07c2c"/><rect x="558.16" y="596.21" width="7.9" height="359.39" fill="#22e998"/><rect x="558.16" y="955.60" width="7.9" height="149.70" fill="#f0b432"/><rect x="567.00" y="573.20" width="7.9" height="4.39" fill="#1150e6"/><rect x="567.00" y="577.59" width="7.9" height="3.10" fill="#8aa6e6"/><rect x="567.00" y="580.69" width="7.9" height="14.48" fill="#f07c2c"/><rect x="567.00" y="595.17" width="7.9" height="328.93" fill="#22e998"/><rect x="567.00" y="924.10" width="7.9" height="181.20" fill="#f0b432"/><rect x="575.84" y="573.20" width="7.9" height="5.42" fill="#1150e6"/><rect x="575.84" y="578.62" width="7.9" height="5.17" fill="#8aa6e6"/><rect x="575.84" y="583.79" width="7.9" height="13.04" fill="#f07c2c"/><rect x="575.84" y="596.83" width="7.9" height="234.67" fill="#22e998"/><rect x="575.84" y="831.50" width="7.9" height="273.80" fill="#f0b432"/><rect x="584.68" y="573.20" width="7.9" height="9.56" fill="#1150e6"/><rect x="584.68" y="582.76" width="7.9" height="3.10" fill="#8aa6e6"/><rect x="584.68" y="585.86" width="7.9" height="13.45" fill="#f07c2c"/><rect x="584.68" y="599.31" width="7.9" height="182.08" fill="#22e998"/><rect x="584.68" y="781.39" width="7.9" height="323.91" fill="#f0b432"/><rect x="593.52" y="573.20" width="7.9" height="2.94" fill="#1150e6"/><rect x="593.52" y="576.14" width="7.9" height="2.07" fill="#8aa6e6"/><rect x="593.52" y="578.21" width="7.9" height="11.79" fill="#f07c2c"/><rect x="593.52" y="590.00" width="7.9" height="96.21" fill="#22e998"/><rect x="593.52" y="686.22" width="7.9" height="419.08" fill="#f0b432"/><rect x="602.36" y="573.20" width="7.9" height="1.70" fill="#1150e6"/><rect x="602.36" y="574.90" width="7.9" height="2.07" fill="#8aa6e6"/><rect x="602.36" y="576.97" width="7.9" height="8.28" fill="#f07c2c"/><rect x="602.36" y="585.24" width="7.9" height="63.31" fill="#22e998"/><rect x="602.36" y="648.56" width="7.9" height="456.74" fill="#f0b432"/><rect x="611.20" y="573.20" width="7.9" height="0.87" fill="#1150e6"/><rect x="611.20" y="574.07" width="7.9" height="2.48" fill="#8aa6e6"/><rect x="611.20" y="576.55" width="7.9" height="8.69" fill="#f07c2c"/><rect x="611.20" y="585.24" width="7.9" height="50.90" fill="#22e998"/><rect x="611.20" y="636.14" width="7.9" height="469.16" fill="#f0b432"/><rect x="620.04" y="573.20" width="7.9" height="2.32" fill="#8aa6e6"/><rect x="620.04" y="575.52" width="7.9" height="5.59" fill="#f07c2c"/><rect x="620.04" y="581.10" width="7.9" height="45.11" fill="#22e998"/><rect x="620.04" y="626.21" width="7.9" height="479.09" fill="#f0b432"/><rect x="628.88" y="573.20" width="7.9" height="2.94" fill="#1150e6"/><rect x="628.88" y="576.14" width="7.9" height="1.45" fill="#8aa6e6"/><rect x="628.88" y="577.59" width="7.9" height="4.14" fill="#f07c2c"/><rect x="628.88" y="581.73" width="7.9" height="27.93" fill="#22e998"/><rect x="628.88" y="609.66" width="7.9" height="495.64" fill="#f0b432"/><rect x="637.72" y="573.20" width="7.9" height="2.32" fill="#8aa6e6"/><rect x="637.72" y="575.52" width="7.9" height="4.14" fill="#f07c2c"/><rect x="637.72" y="579.66" width="7.9" height="18.62" fill="#22e998"/><rect x="637.72" y="598.28" width="7.9" height="507.02" fill="#f0b432"/><rect x="646.56" y="573.20" width="7.9" height="1.70" fill="#8aa6e6"/><rect x="646.56" y="574.90" width="7.9" height="1.66" fill="#f07c2c"/><rect x="646.56" y="576.55" width="7.9" height="12.41" fill="#22e998"/><rect x="646.56" y="588.97" width="7.9" height="516.33" fill="#f0b432"/><rect x="655.40" y="573.20" width="7.9" height="5.01" fill="#f07c2c"/><rect x="655.40" y="578.21" width="7.9" height="8.69" fill="#22e998"/><rect x="655.40" y="586.90" width="7.9" height="518.40" fill="#f0b432"/><rect x="664.24" y="573.20" width="7.9" height="6.46" fill="#f07c2c"/><rect x="664.24" y="579.66" width="7.9" height="6.21" fill="#22e998"/><rect x="664.24" y="585.86" width="7.9" height="519.44" fill="#f0b432"/><rect x="673.08" y="573.20" width="7.9" height="5.42" fill="#f07c2c"/><rect x="673.08" y="578.62" width="7.9" height="5.79" fill="#22e998"/><rect x="673.08" y="584.42" width="7.9" height="520.88" fill="#f0b432"/><rect x="681.92" y="573.20" width="7.9" height="4.39" fill="#f07c2c"/><rect x="681.92" y="577.59" width="7.9" height="4.14" fill="#22e998"/><rect x="681.92" y="581.73" width="7.9" height="523.57" fill="#f0b432"/><rect x="690.76" y="573.20" width="7.9" height="3.35" fill="#f07c2c"/><rect x="690.76" y="576.55" width="7.9" height="3.72" fill="#22e998"/><rect x="690.76" y="580.28" width="7.9" height="525.02" fill="#f0b432"/><rect x="699.60" y="573.20" width="7.9" height="2.94" fill="#f07c2c"/><rect x="699.60" y="576.14" width="7.9" height="3.52" fill="#22e998"/><rect x="699.60" y="579.66" width="7.9" height="525.64" fill="#f0b432"/><rect x="708.44" y="573.20" width="7.9" height="7.49" fill="#f07c2c"/><rect x="708.44" y="580.69" width="7.9" height="5.17" fill="#22e998"/><rect x="708.44" y="585.86" width="7.9" height="519.44" fill="#f0b432"/><rect x="717.28" y="573.20" width="7.9" height="19.49" fill="#f07c2c"/><rect x="717.28" y="592.69" width="7.9" height="4.97" fill="#22e998"/><rect x="717.28" y="597.66" width="7.9" height="507.64" fill="#f0b432"/><rect x="726.12" y="573.20" width="7.9" height="1.30" fill="#22e998"/><rect x="726.12" y="574.50" width="7.9" height="530.80" fill="#f0b432"/><rect x="734.96" y="573.20" width="7.9" height="1.30" fill="#22e998"/><rect x="734.96" y="574.50" width="7.9" height="530.80" fill="#f0b432"/><rect x="743.80" y="573.20" width="7.9" height="1.30" fill="#22e998"/><rect x="743.80" y="574.50" width="7.9" height="530.80" fill="#f0b432"/><rect x="752.64" y="573.20" width="7.9" height="1.30" fill="#22e998"/><rect x="752.64" y="574.50" width="7.9" height="530.80" fill="#f0b432"/><rect x="761.48" y="573.20" width="7.9" height="1.30" fill="#22e998"/><rect x="761.48" y="574.50" width="7.9" height="530.80" fill="#f0b432"/><rect x="770.32" y="573.20" width="7.9" height="1.30" fill="#22e998"/><rect x="770.32" y="574.50" width="7.9" height="530.80" fill="#f0b432"/><rect x="779.16" y="573.20" width="7.9" height="1.30" fill="#22e998"/><rect x="779.16" y="574.50" width="7.9" height="530.80" fill="#f0b432"/><rect x="788.00" y="573.20" width="7.9" height="1.30" fill="#22e998"/><rect x="788.00" y="574.50" width="7.9" height="530.80" fill="#f0b432"/><rect x="796.84" y="573.20" width="7.9" height="1.30" fill="#22e998"/><rect x="796.84" y="574.50" width="7.9" height="530.80" fill="#f0b432"/><rect x="805.68" y="573.20" width="7.9" height="1.30" fill="#22e998"/><rect x="805.68" y="574.50" width="7.9" height="530.80" fill="#f0b432"/><rect x="814.52" y="573.20" width="7.9" height="1.30" fill="#22e998"/><rect x="814.52" y="574.50" width="7.9" height="530.80" fill="#f0b432"/><rect x="823.36" y="573.20" width="7.9" height="1.30" fill="#22e998"/><rect x="823.36" y="574.50" width="7.9" height="530.80" fill="#f0b432"/><rect x="832.20" y="573.20" width="7.9" height="1.30" fill="#22e998"/><rect x="832.20" y="574.50" width="7.9" height="530.80" fill="#f0b432"/><rect x="841.04" y="573.20" width="7.9" height="1.30" fill="#22e998"/><rect x="841.04" y="574.50" width="7.9" height="530.80" fill="#f0b432"/><rect x="849.88" y="573.20" width="7.9" height="1.30" fill="#22e998"/><rect x="849.88" y="574.50" width="7.9" height="530.80" fill="#f0b432"/><rect x="858.72" y="573.20" width="7.9" height="1.30" fill="#22e998"/><rect x="858.72" y="574.50" width="7.9" height="530.80" fill="#f0b432"/><rect x="867.56" y="573.20" width="7.9" height="1.30" fill="#22e998"/><rect x="867.56" y="574.50" width="7.9" height="530.80" fill="#f0b432"/><rect x="876.40" y="573.20" width="7.9" height="1.30" fill="#22e998"/><rect x="876.40" y="574.50" width="7.9" height="530.80" fill="#f0b432"/><rect x="885.24" y="573.20" width="7.9" height="1.30" fill="#22e998"/><rect x="885.24" y="574.50" width="7.9" height="530.80" fill="#f0b432"/><rect x="894.08" y="573.20" width="7.9" height="1.30" fill="#22e998"/><rect x="894.08" y="574.50" width="7.9" height="530.80" fill="#f0b432"/><rect x="902.92" y="573.20" width="7.9" height="1.30" fill="#22e998"/><rect x="902.92" y="574.50" width="7.9" height="530.80" fill="#f0b432"/><rect x="911.76" y="573.20" width="7.9" height="1.20" fill="#1150e6"/><rect x="911.76" y="574.40" width="7.9" height="1.20" fill="#22e998"/><rect x="911.76" y="575.60" width="7.9" height="529.70" fill="#f0b432"/><rect x="920.60" y="573.20" width="7.9" height="4.60" fill="#22e998"/><rect x="920.60" y="577.80" width="7.9" height="527.50" fill="#f0b432"/><rect x="929.44" y="573.20" width="7.9" height="4.60" fill="#22e998"/><rect x="929.44" y="577.80" width="7.9" height="527.50" fill="#f0b432"/><rect x="938.28" y="573.20" width="7.9" height="2.60" fill="#22e998"/><rect x="938.28" y="575.80" width="7.9" height="529.50" fill="#f0b432"/><rect x="947.12" y="573.20" width="7.3" height="532.10" fill="#f0b432"/></svg>
<div class="r" style="left:124.0px;top:836.8px;width:831.0px;height:1.0px;background:rgba(255,255,255,0.13);"></div>
<div class="r" style="left:124.0px;top:1104.6px;width:831.0px;height:1.8px;background:#2a2a2a;"></div>
<div class="r" style="left:1093.0px;top:1161.0px;width:4.0px;height:4.0px;background:#222;border-radius:50%;"></div>
<div class="r" style="left:1099.9px;top:1161.0px;width:4.0px;height:4.0px;background:#222;border-radius:50%;"></div>
<div class="r" style="left:1106.7px;top:1161.0px;width:4.0px;height:4.0px;background:#222;border-radius:50%;"></div>
<div class="r" style="left:1123.0px;top:1149.3px;width:66.2px;height:28.6px;background:#fbf1e4;border-radius:6px;"></div>
<div class="t" style="left:1130.78px;top:1153.89px;font-size:19.5px;color:#a8652a;transform:scaleX(1.0306);">5h</div>
<svg width="1452" height="1208" viewBox="0 0 1452 1208"><path d="M1170.7 1155.6 L1179.3 1170.2 L1162 1170.2 Z" fill="none" stroke="#a8652a" stroke-width="1.5" stroke-linejoin="round"/><path d="M1170.7 1160.5 V1165.3" stroke="#a8652a" stroke-width="1.5" stroke-linecap="round"/><circle cx="1170.7" cy="1167.6" r="0.9" fill="#a8652a"/></svg>
<div class="t" style="left:1258.11px;top:36.26px;font-size:24.5px;color:#1a1a1a;transform:scaleX(0.9740);font-weight:700;">Transactions</div>
<div class="t" style="left:1422.50px;top:36.26px;font-size:24.5px;color:#1a1a1a;">Daily</div>
<div class="t" style="left:1439.20px;top:504.86px;font-size:24.5px;color:#1a1a1a;font-weight:700;">p</div>
<div class="r" style="left:1353.0px;top:355.8px;width:110.0px;height:1.8px;background:#222;"></div>
<div class="r" style="left:1353.0px;top:591.0px;width:110.0px;height:1.0px;background:#e2e2e2;"></div>
<div class="r" style="left:1353.0px;top:860.5px;width:110.0px;height:1.0px;background:#e2e2e2;"></div>
<div class="r" style="left:1353.0px;top:1104.6px;width:110.0px;height:1.8px;background:#222;"></div>
<svg width="1452" height="1208" viewBox="0 0 1452 1208"><polyline points="1353.3,1041.3 1358.5,1020 1365,990" fill="none" stroke="#e6b13a" stroke-width="2.2" stroke-linejoin="round"/><polyline points="1385,990 1392,1024 1397.2,1043 1401.5,1024 1405,1000" fill="none" stroke="#e6b13a" stroke-width="2.2" stroke-linejoin="round"/><polyline points="1430,990 1438.5,1007 1443.7,1010.3 1452,1041.3" fill="none" stroke="#e6b13a" stroke-width="2.2" stroke-linejoin="round"/><polyline points="1353,1000 1358.5,1024 1372.3,1077.5 1380.5,1066 1389.5,1079.2 1398,1073 1407.6,1085 1416,1068 1425.6,1069 1435,1041 1443.7,1081 1452,1063.7" fill="none" stroke="#2bd68c" stroke-width="2.2" stroke-linejoin="round"/><polyline points="1353.3,1049 1362.8,1075.7 1371.4,1077.5 1380,1048.2 1389.5,1079.2 1398,1055 1407.6,1079.2 1416.2,1055 1425.6,1075.7 1434.2,1030 1452,1075.7" fill="none" stroke="#7fa0df" stroke-width="2.2" stroke-linejoin="round"/><polyline points="1353.3,1095.5 1361,1093.8 1371.4,1079.2 1380,1079.2 1389.5,1099 1398,1093.8 1406.7,1095.5 1416.2,1080 1424.8,1098.1 1433.4,1079.2 1442.8,1099 1452,1096.4" fill="none" stroke="#1347d4" stroke-width="2.2" stroke-linejoin="round"/></svg>
<svg width="1452" height="1208" viewBox="0 0 1452 1208"><g transform="translate(35.3,405.2)"><circle cx="9.8" cy="4.4" r="3.5" fill="#e6e6e6"/><circle cx="8.6" cy="9.8" r="3" fill="#f2f2f2"/><circle cx="7.3" cy="2.5" r="1.2" fill="#bbb" stroke="#222" stroke-width="1"/><circle cx="12.3" cy="2.5" r="1.2" fill="#bbb" stroke="#222" stroke-width="1"/><circle cx="10.1" cy="5.1" r="1.1" fill="#444"/><circle cx="3.9" cy="6.7" r="2.5" fill="#0c0c0c"/><circle cx="3.9" cy="12.2" r="3.2" fill="#0c0c0c"/><circle cx="14.5" cy="9.3" r="3" fill="#0c0c0c"/><circle cx="6.9" cy="17.6" r="2.5" fill="#555"/><circle cx="7" cy="19.7" r="1" fill="#222"/><circle cx="10.4" cy="15" r="4" fill="#0c0c0c"/></g></svg>
<svg width="1452" height="1208" viewBox="0 0 1452 1208"><g transform="translate(35.2,1153)"><circle cx="9.8" cy="4.4" r="3.5" fill="#e6e6e6"/><circle cx="8.6" cy="9.8" r="3" fill="#f2f2f2"/><circle cx="7.3" cy="2.5" r="1.2" fill="#bbb" stroke="#222" stroke-width="1"/><circle cx="12.3" cy="2.5" r="1.2" fill="#bbb" stroke="#222" stroke-width="1"/><circle cx="10.1" cy="5.1" r="1.1" fill="#444"/><circle cx="3.9" cy="6.7" r="2.5" fill="#0c0c0c"/><circle cx="3.9" cy="12.2" r="3.2" fill="#0c0c0c"/><circle cx="14.5" cy="9.3" r="3" fill="#0c0c0c"/><circle cx="6.9" cy="17.6" r="2.5" fill="#555"/><circle cx="7" cy="19.7" r="1" fill="#222"/><circle cx="10.4" cy="15" r="4" fill="#0c0c0c"/></g></svg>
<svg width="1452" height="1208" viewBox="0 0 1452 1208"><g transform="translate(1264.7,1152.6)"><circle cx="9.8" cy="4.4" r="3.5" fill="#e6e6e6"/><circle cx="8.6" cy="9.8" r="3" fill="#f2f2f2"/><circle cx="7.3" cy="2.5" r="1.2" fill="#bbb" stroke="#222" stroke-width="1"/><circle cx="12.3" cy="2.5" r="1.2" fill="#bbb" stroke="#222" stroke-width="1"/><circle cx="10.1" cy="5.1" r="1.1" fill="#444"/><circle cx="3.9" cy="6.7" r="2.5" fill="#0c0c0c"/><circle cx="3.9" cy="12.2" r="3.2" fill="#0c0c0c"/><circle cx="14.5" cy="9.3" r="3" fill="#0c0c0c"/><circle cx="6.9" cy="17.6" r="2.5" fill="#555"/><circle cx="7" cy="19.7" r="1" fill="#222"/><circle cx="10.4" cy="15" r="4" fill="#0c0c0c"/></g></svg>
<div style="position:absolute;left:1008px;top:242px;width:409.5px;height:861.5px;border-radius:7px;background:rgba(0,0,0,0.145);filter:blur(110px);"></div>
<div style="position:absolute;left:988px;top:132px;width:449.5px;height:901.5px;border-radius:7px;background:rgba(0,0,0,0.055);filter:blur(70px);"></div>
<div style="position:absolute;left:988px;top:122px;width:449.5px;height:901.5px;box-sizing:border-box;border:1px solid #505050;border-radius:7px;background:#fff;box-shadow:0 3px 10px rgba(0,0,0,0.05);"></div>
<div class="t" style="left:1010.40px;top:148.08px;font-size:24px;color:#1a1a1a;transform:scaleX(1.1301);font-weight:700;">2025-06-17 00:00</div>
<div class="r" style="left:1315.0px;top:140.7px;width:99.6px;height:36.0px;background:#f1f3f5;border-radius:6px;"></div>
<div class="t" style="left:1320.53px;top:150.05px;font-size:20.5px;color:#666;transform:scaleX(1.1797);">177/180</div>
<div class="r" style="left:1009.9px;top:201.8px;width:14.4px;height:14.4px;background:#f59b6c;border-radius:50%;"></div>
<div class="t" style="left:1033.20px;top:197.66px;font-size:24.5px;color:#1a1a1a;transform:scaleX(0.9809);">AB</div>
<div class="t" style="left:1296.28px;top:197.66px;font-size:24.5px;color:#666;transform:scaleX(1.0942);">$463.45m</div>
<div class="r" style="left:1009.9px;top:248.6px;width:14.4px;height:14.4px;background:#d9c878;border-radius:50%;"></div>
<div class="t" style="left:1032.70px;top:244.44px;font-size:24.5px;color:#1a1a1a;">TAIKO</div>
<div class="t" style="left:1311.08px;top:244.44px;font-size:24.5px;color:#666;transform:scaleX(1.0963);">$43.78m</div>
<div class="r" style="left:1009.9px;top:295.4px;width:14.4px;height:14.4px;background:#1a7a38;border-radius:50%;"></div>
<div class="t" style="left:1032.16px;top:291.22px;font-size:24.5px;color:#1a1a1a;transform:scaleX(0.9498);">SERAPH</div>
<div class="t" style="left:1311.08px;top:291.22px;font-size:24.5px;color:#666;transform:scaleX(1.0963);">$36.81m</div>
<div class="r" style="left:1009.9px;top:342.1px;width:14.4px;height:14.4px;background:#d4547e;border-radius:50%;"></div>
<div class="t" style="left:1031.32px;top:338.00px;font-size:24.5px;color:#1a1a1a;transform:scaleX(0.9410);">KOGE</div>
<div class="t" style="left:1311.08px;top:338.00px;font-size:24.5px;color:#666;transform:scaleX(1.0963);">$33.84m</div>
<div class="r" style="left:1009.9px;top:388.9px;width:14.4px;height:14.4px;background:#f688b1;border-radius:50%;"></div>
<div class="t" style="left:1032.48px;top:384.78px;font-size:24.5px;color:#1a1a1a;transform:scaleX(0.8994);">ZRC</div>
<div class="t" style="left:1311.08px;top:384.78px;font-size:24.5px;color:#666;transform:scaleX(1.0963);">$26.91m</div>
<div class="r" style="left:1009.9px;top:435.7px;width:14.4px;height:14.4px;background:#2c1f8c;border-radius:50%;"></div>
<div class="t" style="left:1033.20px;top:431.56px;font-size:24.5px;color:#1a1a1a;transform:scaleX(1.0644);">AICell</div>
<div class="t" style="left:1311.08px;top:431.56px;font-size:24.5px;color:#666;transform:scaleX(1.0963);">$20.64m</div>
<div class="r" style="left:1009.9px;top:482.5px;width:14.4px;height:14.4px;background:#3a6eb2;border-radius:50%;"></div>
<div class="t" style="left:1031.23px;top:478.34px;font-size:24.5px;color:#1a1a1a;transform:scaleX(0.9842);">MYX</div>
<div class="t" style="left:1311.08px;top:478.34px;font-size:24.5px;color:#666;transform:scaleX(1.0963);">$18.32m</div>
<div class="r" style="left:1009.9px;top:529.3px;width:14.4px;height:14.4px;background:#86d5dc;border-radius:50%;"></div>
<div class="t" style="left:1032.38px;top:525.12px;font-size:24.5px;color:#1a1a1a;transform:scaleX(1.0195);">ZKJ</div>
<div class="t" style="left:1311.08px;top:525.12px;font-size:24.5px;color:#666;transform:scaleX(1.0963);">$14.49m</div>
<div class="r" style="left:1009.9px;top:576.0px;width:14.4px;height:14.4px;background:#e8841c;border-radius:50%;"></div>
<div class="t" style="left:1032.17px;top:571.90px;font-size:24.5px;color:#1a1a1a;transform:scaleX(0.9351);">OL</div>
<div class="t" style="left:1311.08px;top:571.90px;font-size:24.5px;color:#666;transform:scaleX(1.0963);">$10.33m</div>
<div class="r" style="left:1009.9px;top:622.8px;width:14.4px;height:14.4px;background:#6e3f79;border-radius:50%;"></div>
<div class="t" style="left:1030.97px;top:618.68px;font-size:24.5px;color:#1a1a1a;transform:scaleX(1.1161);">B2</div>
<div class="t" style="left:1326.28px;top:618.68px;font-size:24.5px;color:#666;transform:scaleX(1.0926);">$8.91m</div>
<div class="r" style="left:1009.9px;top:669.6px;width:14.4px;height:14.4px;background:#b991c9;border-radius:50%;"></div>
<div class="t" style="left:1032.19px;top:665.46px;font-size:24.5px;color:#1a1a1a;transform:scaleX(0.9182);">SPK</div>
<div class="t" style="left:1326.28px;top:665.46px;font-size:24.5px;color:#666;transform:scaleX(1.0926);">$7.90m</div>
<div class="r" style="left:1009.9px;top:716.4px;width:14.4px;height:14.4px;background:#40a999;border-radius:50%;"></div>
<div class="t" style="left:1031.21px;top:712.24px;font-size:24.5px;color:#1a1a1a;">BR</div>
<div class="t" style="left:1326.28px;top:712.24px;font-size:24.5px;color:#666;transform:scaleX(1.1178);">$6.11m</div>
<div class="r" style="left:1009.9px;top:763.2px;width:14.4px;height:14.4px;background:#fbe1ba;border-radius:50%;"></div>
<div class="t" style="left:1031.30px;top:759.02px;font-size:24.5px;color:#1a1a1a;transform:scaleX(0.9513);">RDO</div>
<div class="t" style="left:1326.28px;top:759.02px;font-size:24.5px;color:#666;transform:scaleX(1.0926);">$6.09m</div>
<div class="r" style="left:1009.9px;top:809.9px;width:14.4px;height:14.4px;background:#e06b22;border-radius:50%;"></div>
<div class="t" style="left:1031.23px;top:805.80px;font-size:24.5px;color:#1a1a1a;transform:scaleX(0.9833);">F</div>
<div class="t" style="left:1326.28px;top:805.80px;font-size:24.5px;color:#666;transform:scaleX(1.0926);">$2.96m</div>
<div class="r" style="left:1003.0px;top:843.3px;width:419.0px;height:42.5px;background:#f3f5f7;border-radius:4px;"></div>
<div class="r" style="left:1009.9px;top:856.7px;width:14.4px;height:14.4px;background:#86d1dc;border-radius:50%;"></div>
<div class="t" style="left:1031.30px;top:852.58px;font-size:24.5px;color:#1a1a1a;transform:scaleX(0.9489);">HOUSE</div>
<div class="t" style="left:1318.28px;top:852.58px;font-size:24.5px;color:#1a1a1a;transform:scaleX(1.0929);">$134.61</div>
<div class="r" style="left:1003.0px;top:900.0px;width:419.0px;height:1.2px;background:#ececec;"></div>
<div class="t" style="left:1010.35px;top:929.86px;font-size:24.5px;color:#1a1a1a;transform:scaleX(1.0452);">Other</div>
<div class="t" style="left:1311.08px;top:929.86px;font-size:24.5px;color:#666;transform:scaleX(1.0963);">$31.95m</div>
<div class="t" style="left:1010.95px;top:975.86px;font-size:24.5px;color:#1a1a1a;transform:scaleX(1.1028);">Total</div>
<div class="t" style="left:1296.58px;top:975.86px;font-size:24.5px;color:#666;transform:scaleX(1.0914);">$732.47m</div>
</body></html>
